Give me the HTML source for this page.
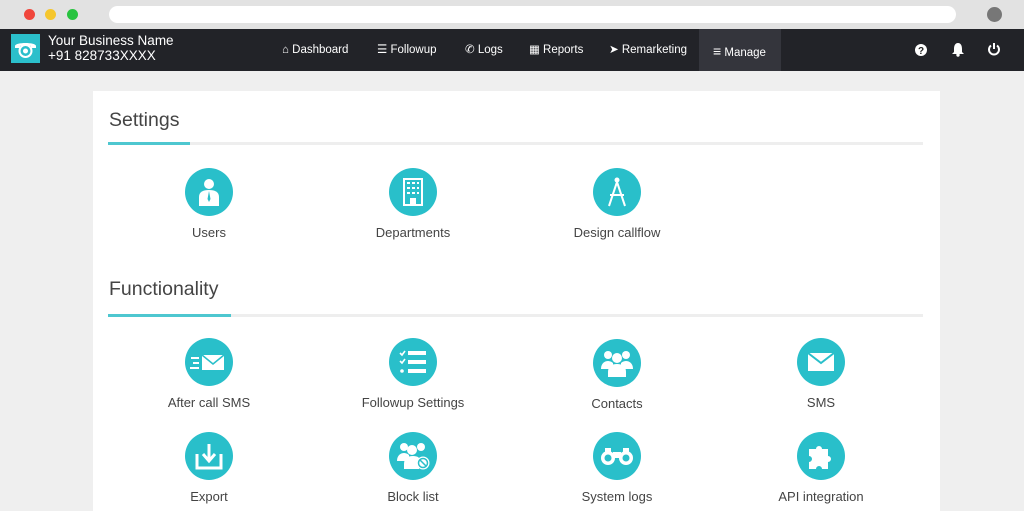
<!DOCTYPE html>
<html><head><meta charset="utf-8"><style>
*{margin:0;padding:0;box-sizing:border-box}
body{width:1024px;height:506px;overflow:hidden;background:#efefef;font-family:"Liberation Sans",sans-serif;position:relative}
.chrome{position:absolute;left:0;top:0;width:1024px;height:29px;background:#e2e2e2}
.dot{position:absolute;top:9px;width:11px;height:11px;border-radius:50%}
.url{position:absolute;left:109px;top:6px;width:847px;height:17px;background:#fff;border-radius:9px}
.nav{position:absolute;left:0;top:29px;width:1024px;height:42px;background:#222328;color:#fff}
.logo{position:absolute;left:11px;top:5px;width:29px;height:29px;background:#2bbfcb}
.bn{position:absolute;left:48px;top:4px;font-size:13.5px;line-height:15px;color:#fff}
.ni{position:absolute;top:13px;height:16px;line-height:16px;font-size:11.5px;color:#fff;white-space:nowrap}
.act{position:absolute;left:699px;top:0;width:82px;height:42px;background:#34353c}
.card{position:absolute;left:93px;top:91px;width:847px;height:420px;background:#fff}
h2{position:absolute;font-weight:normal;font-size:19.5px;color:#444}
.ul{position:absolute;left:15px;width:815px;height:3px;background:#eee}
.ul i{position:absolute;left:0;top:0;height:3px;background:#4ec7d0}
.it{position:absolute;width:160px;text-align:center;font-size:13px;color:#444}
.c{width:48px;height:48px;border-radius:50%;background:#29bfca;margin:0 auto 9px;display:flex;align-items:center;justify-content:center}
</style></head><body>
<div class="chrome">
<div class="dot" style="left:24px;background:#f0463c"></div>
<div class="dot" style="left:45px;background:#f5c62d"></div>
<div class="dot" style="left:67px;background:#27c33f"></div>
<div class="url"></div>
<div class="dot" style="left:987px;top:7px;width:15px;height:15px;background:#777"></div>
</div>
<div class="nav">
<div class="logo"><svg width="29" height="29" viewBox="0 0 29 29"><path d="M4 12c0-4 21-4 21 0v2h-5v-2c-3-1-8-1-11 0v2H4z" fill="#fff"/><circle cx="14.5" cy="17" r="6" fill="none" stroke="#fff" stroke-width="2"/><circle cx="14.5" cy="17" r="2.5" fill="#fff"/></svg></div>
<div class="bn">Your Business Name<br>+91 828733XXXX</div>
<div class="act"></div>
<div class="ni" style="left:282px">&#8962; Dashboard</div>
<div class="ni" style="left:377px">&#9776; Followup</div>
<div class="ni" style="left:465px">&#9990; Logs</div>
<div class="ni" style="left:529px">&#9638; Reports</div>
<div class="ni" style="left:609px">&#10148; Remarketing</div>
<div class="ni" style="left:713px;top:14px"><span style="font-size:14px">&#8801;</span> Manage</div>
<svg style="position:absolute;left:914px;top:14px" width="14" height="14"><circle cx="7" cy="7" r="6" fill="#fff"/><text x="7" y="11" font-size="10" font-weight="bold" text-anchor="middle" fill="#222">?</text></svg>
<svg style="position:absolute;left:951px;top:13px" width="14" height="15"><path d="M7 1c3 0 4 3 4 6v3l2 2H1l2-2V7c0-3 1-6 4-6z" fill="#fff"/><circle cx="7" cy="13" r="1.7" fill="#fff"/></svg>
<svg style="position:absolute;left:987px;top:13px" width="14" height="14"><path d="M4 3.5A5 5 0 1 0 10 3.5" fill="none" stroke="#fff" stroke-width="2"/><path d="M7 1v6" stroke="#fff" stroke-width="2"/></svg>
</div>
<div class="card">
<h2 style="left:16px;top:18px">Settings</h2>
<div class="ul" style="top:51px"><i style="width:82px"></i></div>
<div class="it" style="left:36px;top:77px"><div class="c"><svg width="26" height="30"><circle cx="13" cy="7" r="5" fill="#fff"/><path d="M3 29v-9c0-5 4-7 10-7s10 2 10 7v9z" fill="#fff"/><path d="M13 14l-1.5 8 1.5 3 1.5-3z" fill="#29bfca"/></svg></div>Users</div>
<div class="it" style="left:240px;top:77px"><div class="c"><svg width="22" height="28"><rect x="2" y="1" width="18" height="26" fill="none" stroke="#fff" stroke-width="2"/><g fill="#fff"><rect x="5" y="4" width="3" height="2"/><rect x="10" y="4" width="3" height="2"/><rect x="15" y="4" width="2" height="2"/><rect x="5" y="9" width="3" height="2"/><rect x="10" y="9" width="3" height="2"/><rect x="15" y="9" width="2" height="2"/><rect x="5" y="14" width="3" height="2"/><rect x="10" y="14" width="3" height="2"/><rect x="15" y="14" width="2" height="2"/><rect x="8" y="20" width="6" height="7"/></g></svg></div>Departments</div>
<div class="it" style="left:444px;top:77px"><div class="c"><svg width="24" height="32"><circle cx="12" cy="4" r="2.5" fill="#fff"/><path d="M12 6L4 30M12 6l8 24M5 19h14" stroke="#fff" stroke-width="2" fill="none"/></svg></div>Design callflow</div>
<h2 style="left:16px;top:187px">Functionality</h2>
<div class="ul" style="top:223px"><i style="width:123px"></i></div>
<div class="it" style="left:36px;top:247px"><div class="c"><svg width="38" height="20"><path d="M1 6h8M3 11h6M0 16h9" stroke="#fff" stroke-width="2"/><rect x="12" y="3" width="22" height="15" fill="#fff"/><path d="M12 3l11 9 11-9" stroke="#29bfca" stroke-width="1.5" fill="none"/></svg></div>After call SMS</div>
<div class="it" style="left:240px;top:247px"><div class="c"><svg width="28" height="26"><path d="M1 4l2 2 3-4M1 12l2 2 3-4" stroke="#fff" stroke-width="1.6" fill="none"/><circle cx="3" cy="22" r="1.8" fill="#fff"/><rect x="9" y="2" width="18" height="4" fill="#fff"/><rect x="9" y="11" width="18" height="4" fill="#fff"/><rect x="9" y="20" width="18" height="4" fill="#fff"/></svg></div>Followup Settings</div>
<div class="it" style="left:444px;top:248px"><div class="c"><svg width="34" height="28"><g fill="#fff"><circle cx="8" cy="6" r="4"/><circle cx="26" cy="6" r="4"/><circle cx="17" cy="9" r="5"/><path d="M1 20c0-6 4-8 7-8s5 2 5 2v6z"/><path d="M33 20c0-6-4-8-7-8s-5 2-5 2v6z"/><path d="M8 28v-5c0-6 4-8 9-8s9 2 9 8v5z"/></g></svg></div>Contacts</div>
<div class="it" style="left:648px;top:247px"><div class="c"><svg width="28" height="20"><rect x="1" y="1" width="26" height="18" fill="#fff"/><path d="M1 1l13 10L27 1" stroke="#29bfca" stroke-width="2" fill="none"/></svg></div>SMS</div>
<div class="it" style="left:36px;top:341px"><div class="c"><svg width="28" height="28"><path d="M2 12v14h24V12" stroke="#fff" stroke-width="3" fill="none"/><path d="M14 2v16M8 12l6 7 6-7" stroke="#fff" stroke-width="3" fill="none"/></svg></div>Export</div>
<div class="it" style="left:240px;top:341px"><div class="c"><svg width="34" height="30"><g fill="#fff"><circle cx="8" cy="6" r="4"/><circle cx="25" cy="6" r="4"/><circle cx="16" cy="9" r="5"/><path d="M1 20c0-6 4-8 7-8s5 2 5 2v6z"/><path d="M8 28v-5c0-6 4-8 9-8s6 2 6 2v11z"/><circle cx="27" cy="22" r="6.5"/></g><circle cx="27" cy="22" r="4.5" fill="none" stroke="#29bfca" stroke-width="1.5"/><path d="M24 19l6 6" stroke="#29bfca" stroke-width="1.5"/></svg></div>Block list</div>
<div class="it" style="left:444px;top:341px"><div class="c"><svg width="32" height="20"><g fill="#fff"><circle cx="7" cy="12" r="7"/><circle cx="25" cy="12" r="7"/><rect x="12" y="6" width="8" height="6"/><rect x="4" y="2" width="6" height="6"/><rect x="22" y="2" width="6" height="6"/></g><circle cx="7" cy="12" r="3.5" fill="#29bfca"/><circle cx="25" cy="12" r="3.5" fill="#29bfca"/></svg></div>System logs</div>
<div class="it" style="left:648px;top:341px"><div class="c"><svg width="30" height="30"><path d="M3 8h7a3 3 0 1 1 6 0h6v7a3 3 0 1 1 0 6v7H16a3 3 0 1 0-6 0H3v-7a3 3 0 1 0 0-6z" fill="#fff"/></svg></div>API integration</div>
</div>
</body></html>
